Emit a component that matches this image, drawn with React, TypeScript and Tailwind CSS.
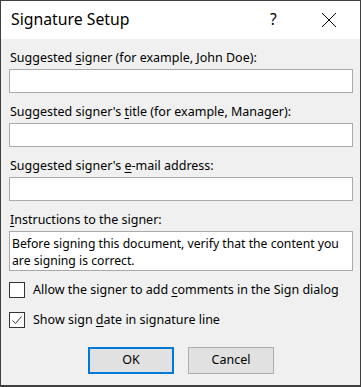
import React from "react";

const font = { fontFamily: '"Noto Sans", "Open Sans", sans-serif' };

function Label({ pre, key1, post }: { pre: string; key1: string; post: string }) {
  return (
    <div className="h-[20px] leading-[20px] text-[12.5px] text-black pl-[1px] mb-[1px] whitespace-nowrap">
      {pre}
      <span className="underline underline-offset-2">{key1}</span>
      {post}
    </div>
  );
}

function Field() {
  return <div className="h-[24px] w-[344px] border border-[#a9a9a9] bg-white" />;
}

export default function App() {
  return (
    <div
      className="w-[361px] h-[387px] border border-[#3f3f3f] border-b-2 bg-[#f0f0f0] flex flex-col"
      style={font}
    >
      <div className="h-[38px] bg-white flex items-center shrink-0">
        <div className="pl-[10px] text-[15.8px] text-black leading-none flex-1">Signature Setup</div>
        <div className="text-[15.5px] text-black w-[20px] mr-[31px] leading-none">?</div>
        <svg width="16" height="16" viewBox="0 0 16 16" className="mr-[23px]">
          <path d="M1 1 L15 15 M15 1 L1 15" stroke="#000" strokeWidth="1" fill="none" />
        </svg>
      </div>
      <div className="flex flex-col px-[8px] pt-[9px]">
        <Label pre="Suggested " key1="s" post="igner (for example, John Doe):" />
        <Field />
        <div className="h-[9px]" />
        <Label pre="Suggested signer's " key1="t" post="itle (for example, Manager):" />
        <Field />
        <div className="h-[9px]" />
        <Label pre="Suggested signer's " key1="e" post="-mail address:" />
        <Field />
        <div className="h-[9px]" />
        <Label pre="" key1="I" post="nstructions to the signer:" />
        <div className="h-[40px] w-[344px] border border-[#a9a9a9] bg-white px-[2px] pt-[3px] text-[12.2px] leading-[17px] text-black whitespace-nowrap">
          Before signing this document, verify that the content you
          <br />
          are signing is correct.
        </div>
        <div className="h-[9px]" />
        <div className="flex items-center h-[20px] text-[12.5px] text-black">
          <div className="w-[16px] h-[16px] border border-[#333] bg-white shrink-0" />
          <span className="ml-[8px] whitespace-nowrap">
            Allow the signer to add <span className="underline underline-offset-2">c</span>omments in the Sign dialog
          </span>
        </div>
        <div className="h-[10px]" />
        <div className="flex items-center h-[20px] text-[12.5px] text-black">
          <div className="w-[16px] h-[16px] border border-[#333] bg-white shrink-0 flex items-center justify-center">
            <svg width="12" height="12" viewBox="0 0 12 12">
              <path d="M1.5 6.5 L4.5 9.5 L10.5 2.5" stroke="#333" strokeWidth="1" fill="none" />
            </svg>
          </div>
          <span className="ml-[8px] whitespace-nowrap">
            Show sign <span className="underline underline-offset-2">d</span>ate in signature line
          </span>
        </div>
        <div className="h-[17px]" />
        <div className="flex justify-center gap-[14px] pl-[1px]">
          <div className="w-[86px] h-[27px] border-2 border-[#0078d7] bg-[#e1e1e1] flex items-center justify-center text-[12.5px] text-black">
            OK
          </div>
          <div className="w-[86px] h-[27px] border border-[#adadad] bg-[#e1e1e1] flex items-center justify-center text-[12.5px] text-black">
            Cancel
          </div>
        </div>
      </div>
    </div>
  );
}
